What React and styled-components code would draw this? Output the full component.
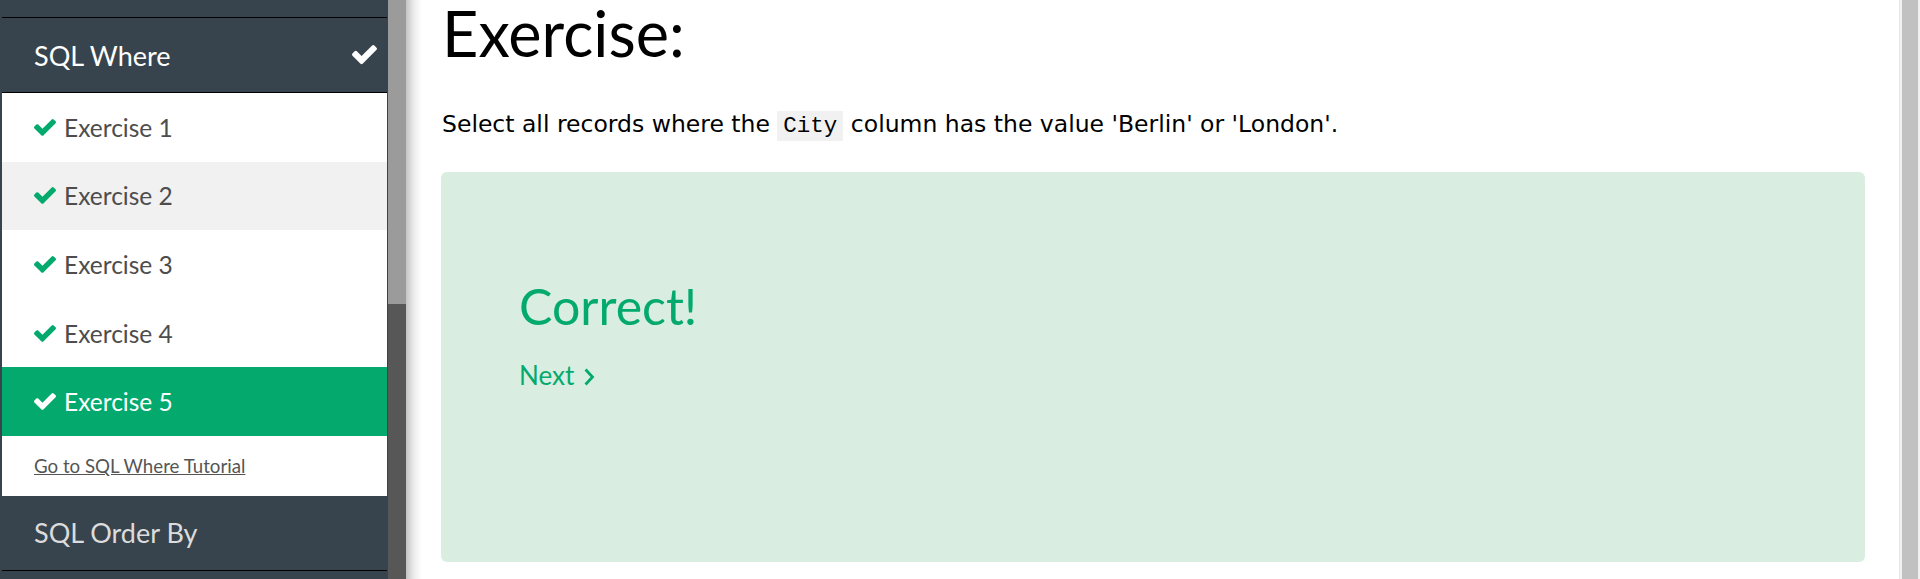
import React from "react";
import styled, { createGlobalStyle } from "styled-components";

const GlobalStyle = createGlobalStyle`
  html, body { margin: 0; padding: 0; background: #fff; }
  body { overflow: hidden; }
  * { box-sizing: border-box; }
`;

const Page = styled.div`
  display: flex;
  height: 579px;
  overflow: hidden;
  font-family: Lato, "Open Sans", sans-serif;
`;

const Sidebar = styled.nav`
  width: 388px;
  flex: none;
  background: #38444d;
  padding: 0 1px 0 2px;
  display: flex;
  flex-direction: column;
`;

const SectionTail = styled.div`
  height: 18px;
  border-bottom: 1px solid #000;
`;

const SectionHeader = styled.div`
  height: 75px;
  border-bottom: 1px solid #000;
  display: flex;
  align-items: center;
  justify-content: space-between;
  padding: 0 10px 0 32px;
  font-size: 27px;
  color: ${(p) => (p.$active ? "#fff" : "#dcdcdc")};
`;

const ItemList = styled.ul`
  list-style: none;
  margin: 0;
  padding: 0;
  background: #fff;
`;

const ExerciseItem = styled.li`
  height: 68.6px;
  display: flex;
  align-items: center;
  gap: 8px;
  padding-left: 32px;
  font-size: 24.5px;
  color: ${(p) => (p.$current ? "#fff" : "#4d4d4d")};
  background: ${(p) => (p.$current ? "#04aa6d" : p.$hover ? "#f1f1f1" : "#fff")};
`;

const LinkRow = styled.li`
  height: 60px;
  display: flex;
  align-items: center;
  padding-left: 32px;
`;

const TutorialLink = styled.a`
  font-size: 18.7px;
  color: #555;
  text-decoration: underline;
`;

const SideScroll = styled.div`
  width: 18px;
  flex: none;
  background: #575757;
  display: flex;
  flex-direction: column;
`;

const SideThumb = styled.div`
  height: 304px;
  background: #9b9b9b;
`;

const Shadow = styled.div`
  width: 16px;
  flex: none;
  background: linear-gradient(to right, #c4c4c4, #ececec 50%, #fff);
`;

const Main = styled.main`
  flex: 1;
  padding: 0 34px 0 19px;
  min-width: 0;
`;

const Heading = styled.h2`
  margin: 1px 0 0 1px;
  font-family: Lato, sans-serif;
  font-weight: 400;
  font-size: 63px;
  line-height: 1;
  color: #000;
`;

const Prompt = styled.p`
  margin: 42.6px 0 0 1px;
  font-family: "DejaVu Sans", Verdana, sans-serif;
  font-size: 23.5px;
  line-height: 34.5px;
  color: #000;
`;

const Code = styled.code`
  font-family: "Liberation Mono", "DejaVu Sans Mono", monospace;
  font-size: 22.5px;
  line-height: 1;
  background: #f1f1f1;
  padding: 2px 6px;
`;

const ResultCard = styled.section`
  margin-top: 31px;
  height: 390px;
  background: #d9eee1;
  border-radius: 6px;
  padding: 104px 78px 0;
`;

const ResultTitle = styled.h3`
  margin: 0;
  font-family: Lato, sans-serif;
  font-weight: 400;
  font-size: 50px;
  line-height: 1.2;
  color: #04aa6d;
`;

const NextLink = styled.a`
  display: flex;
  width: fit-content;
  align-items: center;
  gap: 10px;
  margin-top: 24px;
  font-family: Lato, sans-serif;
  font-size: 26px;
  line-height: 1.2;
  color: #04aa6d;
  text-decoration: none;

  svg {
    margin-top: 3px;
  }
`;

const PageScroll = styled.div`
  width: 21px;
  flex: none;
  border-left: 1px solid #e6e6e6;
  background: #f1f1f1;
  padding: 0 2px;
  display: flex;
`;

const PageThumb = styled.div`
  flex: 1;
  background: #c1c1c1;
`;

const Check = ({ size = 22, color }) => (
  <svg width={size} height={size * 1188 / 1550} viewBox="121 334 1550 1188" fill={color}>
    <path d="M1671 566q0 40-28 68l-724 724-136 136q-28 28-68 28t-68-28l-136-136-362-362q-28-28-28-68t28-68l136-136q28-28 68-28t68 28l294 295 656-657q28-28 68-28t68 28l136 136q28 28 28 68z" />
  </svg>
);

const Chevron = () => (
  <svg width="11" height="18" viewBox="0 0 11 18" fill="none" stroke="#04aa6d" strokeWidth="2.8" strokeLinecap="square">
    <path d="M2.5 2.5l6 6.5-6 6.5" />
  </svg>
);

const exercises = [1, 2, 3, 4, 5];

export default function App() {
  return (
    <>
      <GlobalStyle />
      <Page>
        <Sidebar>
          <SectionTail />
          <SectionHeader $active>
            <span>SQL Where</span>
            <Check size={25} color="#fff" />
          </SectionHeader>
          <ItemList>
            {exercises.map((n) => (
              <ExerciseItem key={n} $hover={n === 2} $current={n === 5}>
                <Check size={22} color={n === 5 ? "#fff" : "#04aa6d"} />
                <span>Exercise {n}</span>
              </ExerciseItem>
            ))}
            <LinkRow>
              <TutorialLink href="#">Go to SQL Where Tutorial</TutorialLink>
            </LinkRow>
          </ItemList>
          <SectionHeader>
            <span>SQL Order By</span>
          </SectionHeader>
        </Sidebar>
        <SideScroll>
          <SideThumb />
        </SideScroll>
        <Shadow />
        <Main>
          <Heading>Exercise:</Heading>
          <Prompt>
            Select all records where the <Code>City</Code> column has the value 'Berlin' or 'London'.
          </Prompt>
          <ResultCard>
            <ResultTitle>Correct!</ResultTitle>
            <NextLink href="#">
              Next <Chevron />
            </NextLink>
          </ResultCard>
        </Main>
        <PageScroll>
          <PageThumb />
        </PageScroll>
      </Page>
    </>
  );
}
